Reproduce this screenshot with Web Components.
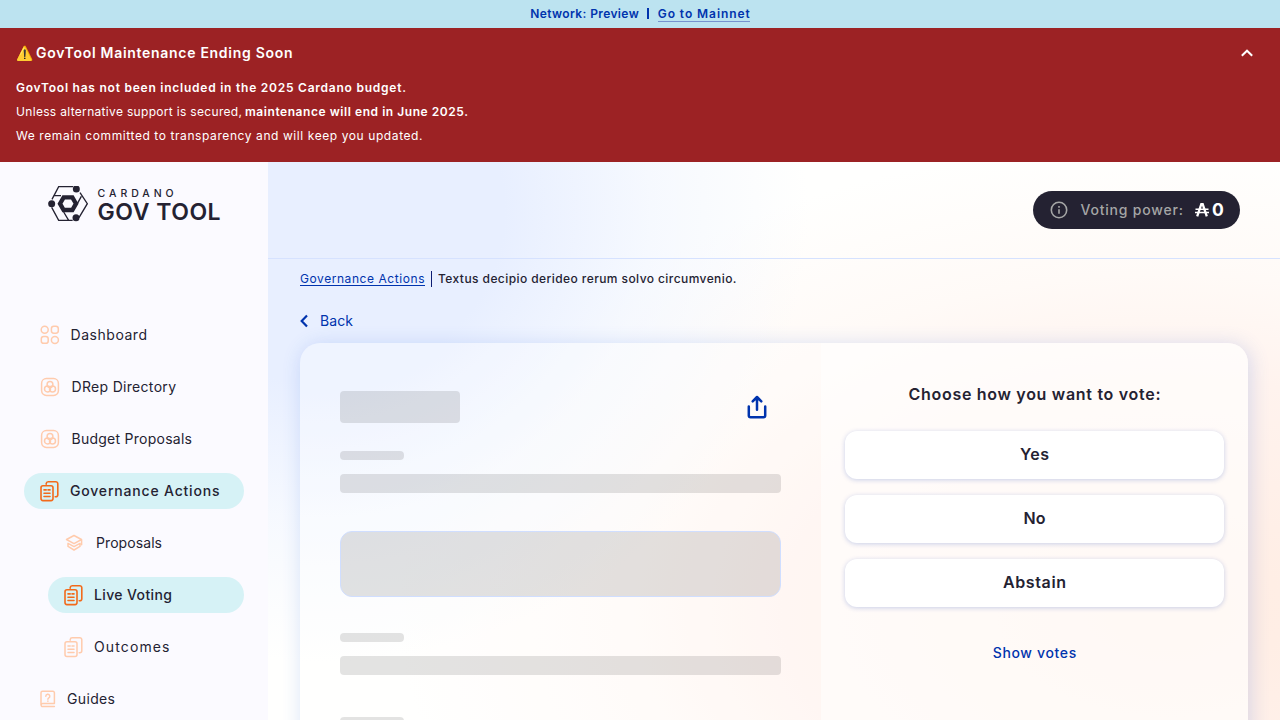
<!DOCTYPE html>
<html lang="en">
<head>
<meta charset="utf-8">
<title>GovTool</title>
<style>
html,body{margin:0;height:100%;overflow:hidden}
body{font-family:Inter,"Noto Sans",sans-serif;color:#242232;background:#fff}
</style>
</head>
<body>
<gov-app></gov-app>
<script>
const define = (name, html, setup) => {
  const tpl = document.createElement('template');
  tpl.innerHTML = html;
  customElements.define(name, class extends HTMLElement {
    connectedCallback() {
      if (this.shadowRoot) return;
      const root = this.attachShadow({ mode: 'open' });
      root.append(tpl.content.cloneNode(true));
      if (setup) setup(this, root);
    }
  });
};

// Single-line text tracked so that it takes the width given in "w".
define('fit-text', `<style>:host{display:inline-block;white-space:pre}span{display:inline-block}</style><span><slot></slot></span>`,
  (host, root) => {
    const span = root.querySelector('span');
    const target = +host.getAttribute('w');
    const count = [...host.textContent].length;
    const natural = span.getBoundingClientRect().width;
    const gap = (target - natural) / (count - 1);
    span.style.letterSpacing = gap + 'px';
    span.style.marginRight = -gap + 'px';
  });

const doc = `<path d="M6.2 3.2V2.6A2 2 0 0 1 8.2.8h7.6a2 2 0 0 1 2 2v11a2 2 0 0 1-2 2h-.6"/><rect x="1" y="4.8" width="12" height="14.8" rx="2"/><path d="M4 8.9h2.2M8 8.9h2M4 12.2h6M4 15.5h6"/>`;
const drep = `<rect x="1.6" y="1.6" width="16.8" height="16.8" rx="4.8"/><circle cx="10" cy="7.5" r="2.9"/><circle cx="7.5" cy="11.9" r="3"/><circle cx="12.5" cy="11.9" r="3"/>`;
const icons = {
  grid: [20, 20, `<circle cx="4.7" cy="4.7" r="3.5"/><rect x="11.4" y="1.3" width="6.9" height="6.9" rx="2.4"/><rect x="1.3" y="11.4" width="6.9" height="6.9" rx="2.4"/><circle cx="14.9" cy="14.9" r="3.5"/>`],
  drep: [20, 20, drep],
  doc: [20, 21, doc],
  layers: [20, 18, `<path d="M10 1.5 17.5 5.5 10 9.6 2.5 5.5ZM17.6 5.8v5M4 9.4v3L10 16l6-3.6v-3L10 12.6 4 9.4"/>`],
  guide: [16, 18, `<path d="M14.4 13.6V2.8A1.5 1.5 0 0 0 12.9 1.3H2.5A1.5 1.5 0 0 0 1 2.8v12M14.4 13.6H2.6a1.5 1.5 0 0 0 0 3h11.8M5.8 6.2a2 2 0 1 1 3 1.7c-.6.4-.9.7-.9 1.4M7.9 11v.3"/>`]
};

define('nav-item', `<style>
:host{display:flex;align-items:center;height:36px;padding-left:16px;border-radius:18px;font-size:14px;box-sizing:border-box}
:host([sub]){margin-left:24px}
:host([active]){background:#d6f2f6;font-weight:500}
svg{fill:none;stroke:#ffcbad;stroke-width:1.5;stroke-linejoin:round;stroke-linecap:round;flex:none}
:host([active]) svg{stroke:#f26a1b;stroke-width:1.6}
fit-text{line-height:20px}
</style><svg></svg><fit-text></fit-text>`, (host, root) => {
  const [w, h, art] = icons[host.getAttribute('icon')];
  const svg = root.querySelector('svg');
  svg.setAttribute('width', w); svg.setAttribute('height', h);
  svg.setAttribute('viewBox', `0 0 ${w} ${h}`);
  svg.innerHTML = art;
  const old = root.querySelector('fit-text');
  const label = document.createElement('fit-text');
  label.setAttribute('w', host.getAttribute('w'));
  label.textContent = host.getAttribute('label');
  label.style.marginLeft = (host.getAttribute('gap') || 10) + 'px';
  old.replaceWith(label);
});

define('gov-logo', `<style>
:host{display:flex;gap:9px;height:38px;color:#242232}
svg{display:block;flex:none}
.w{display:flex;flex-direction:column;align-items:flex-start}
.a{font-size:10.5px;line-height:16px;font-weight:500}
.b{font-size:23px;line-height:23px;font-weight:600;margin-top:-1px}
</style>
<svg width="41" height="37" viewBox="54 48 123 111" fill="none" stroke="#242232" stroke-width="4">
<path d="M66 88 86 50H130M70 77H93M150 68 172 101 147 143M154 79 142 101M65 112 86 151H128M101 126 116 151"/>
<path d="M101 82h26l11 19-11 19h-26L90 101z" stroke-width="13"/>
<g fill="#242232" stroke="none"><circle cx="139" cy="57" r="10.5"/><circle cx="65" cy="101" r="10.5"/><circle cx="138" cy="143" r="10.5"/></g></svg>
<div class="w"><fit-text class="a" w="76">CARDANO</fit-text><fit-text class="b" w="123">GOV TOOL</fit-text></div>`);

define('side-nav', `<style>
:host{display:flex;flex-direction:column;background:#fbfaff;padding:24px 24px 0;box-sizing:border-box}
gov-logo{margin-left:23.6px}
nav{display:flex;flex-direction:column;gap:16px;margin-top:93px}
</style><gov-logo></gov-logo><nav>
<nav-item icon="grid" label="Dashboard" w="76.5" gap="10.5"></nav-item>
<nav-item icon="drep" label="DRep Directory" w="104.5" gap="11.5"></nav-item>
<nav-item icon="drep" label="Budget Proposals" w="120.5" gap="11.5"></nav-item>
<nav-item icon="doc" label="Governance Actions" w="149.5" active></nav-item>
<nav-item icon="layers" label="Proposals" w="66" gap="12" sub></nav-item>
<nav-item icon="doc" label="Live Voting" w="78" sub active></nav-item>
<nav-item icon="doc" label="Outcomes" w="75.5" sub></nav-item>
<nav-item icon="guide" label="Guides" w="48" gap="11"></nav-item>
</nav>`);

define('network-bar', `<style>
:host{display:flex;justify-content:center;align-items:center;height:28px;background:#bce3f0;color:#0033ad;font-size:12px;font-weight:600;gap:8px}
i{width:2px;height:11px;background:#0033ad;margin:0 1px 1px 0}
a{border-bottom:1px solid #7793cf;line-height:12px}
fit-text{line-height:14px}
</style><fit-text w="108.5">Network: Preview</fit-text><i></i><a><fit-text w="92">Go to Mainnet</fit-text></a>`);

define('maintenance-banner', `<style>
:host{display:block;height:134px;box-sizing:border-box;background:#9c2224;color:#fff;padding:13px 16px 0;font-size:12px}
header{display:flex;justify-content:space-between;height:24px;align-items:center;font-size:14px;font-weight:600;margin-bottom:11px}
.t{display:flex;gap:3px;align-items:center;height:24px;line-height:22px}
.e{font-family:"Noto Color Emoji",sans-serif;font-size:14px;font-weight:400;width:17px}
header>svg{margin-right:11px}
p{margin:0;height:24px;line-height:24px;display:flex;gap:3px}
b{font-weight:600}
</style><header><div class="t"><span class="e">⚠️</span><fit-text w="256.5">GovTool Maintenance Ending Soon</fit-text></div>
<svg width="12" height="8" viewBox="0 0 12 8" fill="none" stroke="#fff" stroke-width="2"><path d="M.8 6.8 6 1.7l5.2 5.1"/></svg></header>
<p><b><fit-text w="390">GovTool has not been included in the 2025 Cardano budget.</fit-text></b></p>
<p><fit-text w="226">Unless alternative support is secured,</fit-text><b><fit-text w="223">maintenance will end in June 2025.</fit-text></b></p>
<p><fit-text w="406.5">We remain committed to transparency and will keep you updated.</fit-text></p>`);

define('voting-power', `<style>
:host{display:flex;align-items:center;width:207px;height:38px;box-sizing:border-box;border-radius:19px;background:#242232;padding-left:17px;color:#a5a6a6;font-size:14px;font-weight:500}
.l{margin:0 0 2px 12.5px}
.ada{margin-left:12px}
.n{color:#fff;font-size:17.5px;font-weight:700;margin:0 0 1px 3px}
</style><svg width="18" height="18" viewBox="0 0 18 18" fill="none" stroke="#a5a6a6" stroke-width="1.6"><circle cx="9" cy="9" r="7.7"/><path d="M9 8.2v4.6M9 5v1.7"/></svg>
<fit-text class="l" w="102.5">Voting power:</fit-text>
<svg class="ada" width="14" height="14" viewBox="0 0 14 14" fill="none" stroke="#fff"><path d="M2.2 13.4 6.3 1.2h1.4l4.1 12.2" stroke-width="2.3"/><path d="M.5 6.2h13M0 9.5h14" stroke-width="1.6"/></svg>
<span class="n">0</span>`);

define('top-bar', `<style>:host{display:flex;justify-content:flex-end;align-items:center;height:97px;padding-right:40px;border-bottom:1px solid #d6e2ff;box-sizing:border-box}</style><voting-power></voting-power>`);

define('bread-crumbs', `<style>
:host{display:flex;align-items:center;height:16px;font-size:12px}
a{color:#0033ad;border-bottom:1px solid #0033ad;line-height:13px;height:13px;display:block;box-sizing:content-box}
a fit-text{line-height:14px}
i{width:1px;height:16px;background:#0d1d72;margin:0 6.5px 0 6px}
b{font-weight:500;line-height:14px}
</style><a><fit-text w="124.5">Governance Actions</fit-text></a><i></i><b><fit-text w="298.5">Textus decipio derideo rerum solvo circumvenio.</fit-text></b>`);

define('back-link', `<style>
:host{display:flex;align-items:center;height:20px;color:#0033ad;font-size:14px;gap:12px}
fit-text{margin-bottom:1px;line-height:18px}
</style><svg width="8" height="14" viewBox="0 0 8 14" fill="none" stroke="#0033ad" stroke-width="2.2"><path d="M7 1.6 1.7 7 7 12.4"/></svg><fit-text w="33">Back</fit-text>`);

define('skeleton-box', `<style>:host{display:block;background:rgba(0,0,0,.11);border-radius:4px;box-sizing:border-box}</style>`);

define('vote-option', `<style>:host{display:flex;align-items:center;justify-content:center;height:48px;padding-bottom:2px;box-sizing:border-box;border-radius:12px;background:#fff;box-shadow:0 1px 5px rgba(0,51,173,.22);font-size:16px;font-weight:600}</style><slot></slot>`);

define('action-card', `<style>
:host{display:grid;grid-template-columns:521px 427px;height:500px;border-radius:20px;box-shadow:2px 2px 20px rgba(47,98,220,.2);overflow:hidden;background:rgba(255,255,255,.3)}
.l{padding:48px 40px 0}
.r{padding:39px 24px 0;background:rgba(255,255,255,.5);display:flex;flex-direction:column}
.top{display:flex;justify-content:space-between;padding-right:14px}
.tag{width:120px;height:32px}
.cap{width:64px;height:9px;margin-top:28px}
.line{height:19px;margin-top:14px}
.big{height:66px;margin-top:38px;border-radius:12px;border:1px solid #d0deff}
.cap2{margin-top:36px}.cap3{margin-top:42px}
h2{font-size:16px;line-height:24px;margin:0;text-align:center;font-weight:600}
.opts{display:flex;flex-direction:column;gap:16px;margin-top:25px}
.show{align-self:center;color:#0033ad;font-size:14px;font-weight:500;line-height:20px;margin-top:36px}
.top svg{margin-top:4px}
</style><section class="l"><div class="top"><skeleton-box class="tag"></skeleton-box>
<svg width="20" height="24" viewBox="0 0 20 24" fill="none" stroke="#0033ad" stroke-width="2.5" stroke-linecap="round" stroke-linejoin="round"><path d="M1.8 11.6v8.8a1.8 1.8 0 0 0 1.8 1.8h12.8a1.8 1.8 0 0 0 1.8-1.8v-8.8M10 14.8V2.2M5.7 6.3 10 2l4.3 4.3"/></svg></div>
<skeleton-box class="cap"></skeleton-box><skeleton-box class="line"></skeleton-box>
<skeleton-box class="big"></skeleton-box>
<skeleton-box class="cap cap2"></skeleton-box><skeleton-box class="line"></skeleton-box>
<skeleton-box class="cap cap3"></skeleton-box></section>
<section class="r"><h2><fit-text w="252">Choose how you want to vote:</fit-text></h2>
<div class="opts"><vote-option><fit-text w="29">Yes</fit-text></vote-option><vote-option><fit-text w="22">No</fit-text></vote-option><vote-option><fit-text w="63">Abstain</fit-text></vote-option></div>
<fit-text class="show" w="83.5">Show votes</fit-text></section>`);

define('gov-app', `<style>
:host{display:flex;flex-direction:column;height:720px;overflow:hidden}
.body{display:grid;grid-template-columns:268px 1fr;height:558px}
main{overflow:hidden;background:
radial-gradient(ellipse 490px 450px at 50px 50px,#e8efff 0,#e8efff 38%,rgba(240,245,255,.6) 68%,rgba(255,255,255,0) 100%),
radial-gradient(ellipse 770px 470px at 900px 450px,#ffece1 0,#fff0e9 30%,#fff3ee 50%,rgba(255,248,244,.7) 72%,rgba(255,253,250,0) 100%),
#fffffe}
.page{padding:12px 32px 0}
back-link{margin:24px 0 12px}
</style><network-bar></network-bar><maintenance-banner></maintenance-banner>
<div class="body"><side-nav></side-nav><main><top-bar></top-bar><div class="page"><bread-crumbs></bread-crumbs><back-link></back-link><action-card></action-card></div></main></div>`);
</script>
</body>
</html>
